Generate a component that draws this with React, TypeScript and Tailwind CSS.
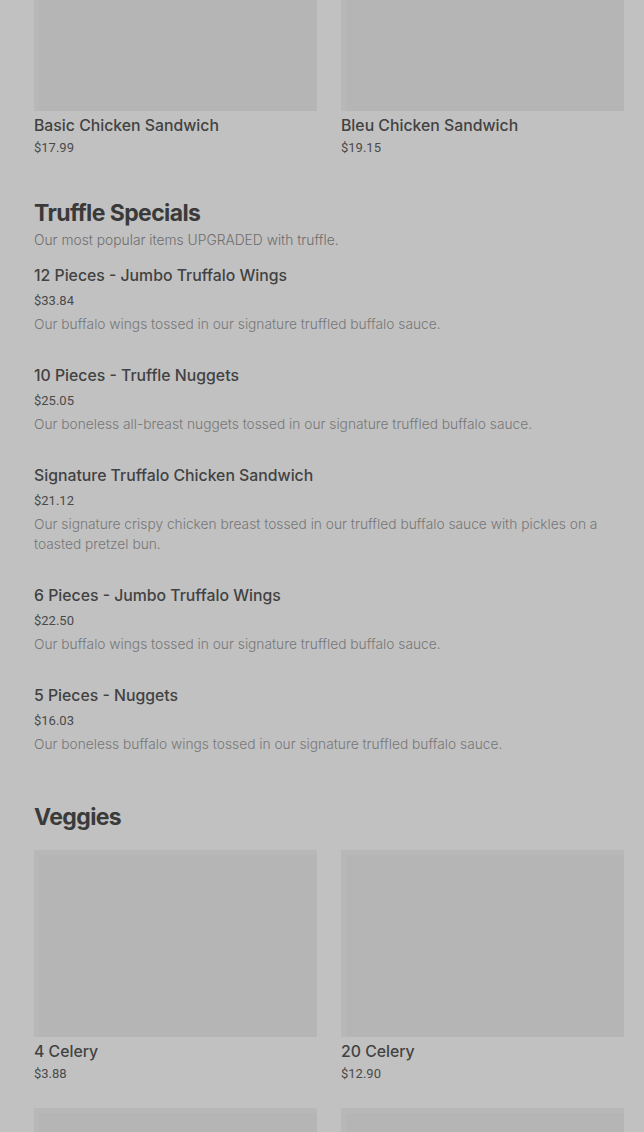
import React from 'react';

type Card = { name: string; price: string };
type Item = { name: string; price: string; desc: string };

const sandwiches: Card[] = [
  { name: 'Basic Chicken Sandwich', price: '$17.99' },
  { name: 'Bleu Chicken Sandwich', price: '$19.15' },
];

const truffle: Item[] = [
  { name: '12 Pieces - Jumbo Truffalo Wings', price: '$33.84', desc: 'Our buffalo wings tossed in our signature truffled buffalo sauce.' },
  { name: '10 Pieces - Truffle Nuggets', price: '$25.05', desc: 'Our boneless all-breast nuggets tossed in our signature truffled buffalo sauce.' },
  { name: 'Signature Truffalo Chicken Sandwich', price: '$21.12', desc: 'Our signature crispy chicken breast tossed in our truffled buffalo sauce with pickles on a toasted pretzel bun.' },
  { name: '6 Pieces - Jumbo Truffalo Wings', price: '$22.50', desc: 'Our buffalo wings tossed in our signature truffled buffalo sauce.' },
  { name: '5 Pieces - Nuggets', price: '$16.03', desc: 'Our boneless buffalo wings tossed in our signature truffled buffalo sauce.' },
];

const veggies: Card[] = [
  { name: '4 Celery', price: '$3.88' },
  { name: '20 Celery', price: '$12.90' },
  { name: 'Carrots', price: '$3.88' },
  { name: 'Carrots & Celery', price: '$12.90' },
];

const ProductCard: React.FC<{ card: Card }> = ({ card }) => (
  <div className="flex flex-col">
    <div className="h-[187px] bg-[#b5b5b5] border-l-[5px] border-t-[5px] border-[#b8b8b8]"></div>
    <p className="mt-[5px] text-[15.8px] leading-5 font-medium text-[#424242] font-['Inter',sans-serif]">{card.name}</p>
    <p className="mt-[2px] text-[13px] leading-5 text-[#4a4a4a]">{card.price}</p>
  </div>
);

const App: React.FC = () => {
  return (
    <div className="min-h-screen bg-[#c1c1c1] overflow-hidden font-['Roboto',sans-serif]">
      <div className="pl-[34px] pr-[20px]">
        <div className="-mt-[76px] grid grid-cols-2 gap-x-6 gap-y-6">
          {sandwiches.map((c) => (
            <ProductCard key={c.name} card={c} />
          ))}
        </div>

        <h2 className="mt-[39px] text-[23px] leading-8 font-bold tracking-[-0.6px] text-[#3a3a3a] font-['Inter',sans-serif]">Truffle Specials</h2>
        <p className="mt-[1px] text-[13.8px] leading-5 font-light text-[#6e6e6e] font-['Inter',sans-serif]">Our most popular items UPGRADED with truffle.</p>

        <div className="mt-[16px] flex flex-col gap-[32px]">
          {truffle.map((it) => (
            <div key={it.name} className="flex flex-col">
              <p className="text-[15.8px] leading-5 font-medium text-[#424242] font-['Inter',sans-serif]">{it.name}</p>
              <p className="mt-[5px] text-[13px] leading-5 text-[#4a4a4a]">{it.price}</p>
              <p className="mt-[3px] text-[13.75px] leading-5 font-light text-[#777777] font-['Inter',sans-serif]">{it.desc}</p>
            </div>
          ))}
        </div>

        <h2 className="mt-[47px] text-[23px] leading-8 font-bold tracking-[-0.6px] text-[#3a3a3a] font-['Inter',sans-serif]">Veggies</h2>

        <div className="mt-[17px] grid grid-cols-2 gap-x-6 gap-y-6 pb-10">
          {veggies.map((c) => (
            <ProductCard key={c.name} card={c} />
          ))}
        </div>
      </div>
    </div>
  );
};

export default App;
